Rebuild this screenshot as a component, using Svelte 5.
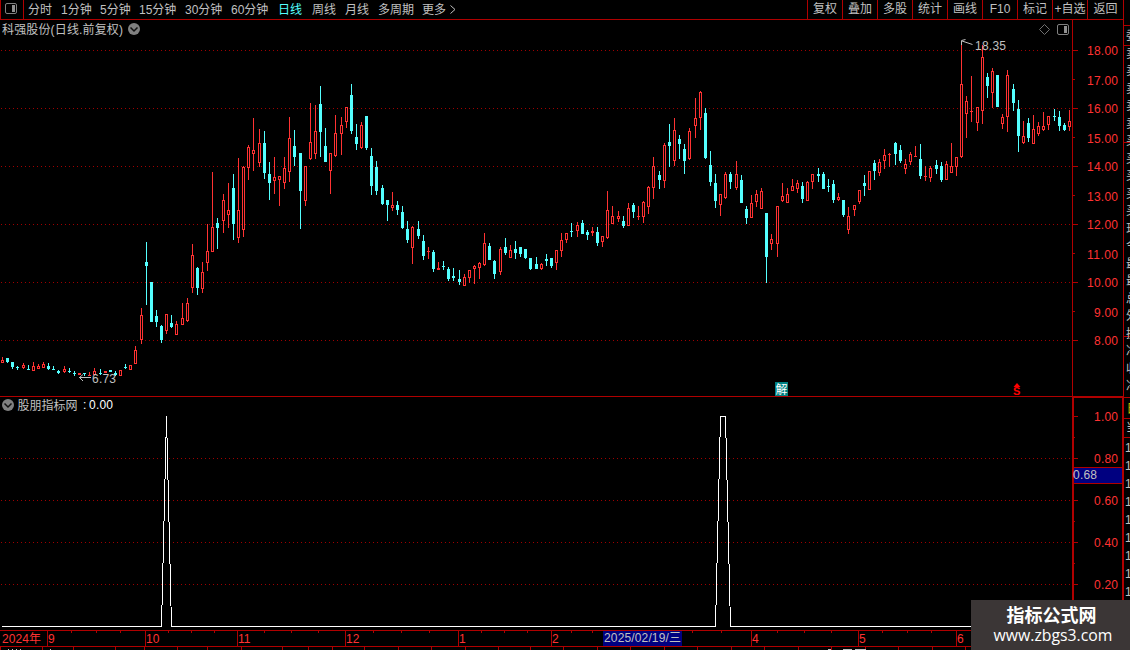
<script lang="ts">
  // x, high, body top, body bottom, low, direction (1 = rise, 0 = fall)
  const candles = [
    [2, 357, 360, 363, 363, 1], [7, 358, 358, 362, 363, 0], [12, 362, 362, 367, 369, 0],
    [17, 366, 367, 368, 370, 0], [23, 363, 365, 368, 369, 1], [28, 365, 369, 370, 370, 0],
    [33, 362, 366, 371, 371, 1], [38, 364, 366, 369, 369, 1], [43, 362, 364, 368, 368, 1],
    [48, 363, 366, 369, 370, 0], [53, 366, 369, 370, 370, 0], [58, 370, 371, 373, 374, 0],
    [64, 366, 369, 372, 373, 1], [69, 368, 371, 372, 373, 0], [74, 371, 373, 374, 376, 0],
    [79, 373, 373, 375, 375, 1], [84, 373, 373, 374, 376, 0], [89, 372, 375, 376, 376, 1],
    [94, 368, 371, 375, 375, 1], [100, 369, 373, 374, 375, 0], [105, 371, 371, 373, 373, 1],
    [110, 370, 370, 372, 372, 0], [115, 371, 373, 375, 376, 0], [120, 370, 370, 376, 376, 1],
    [125, 364, 367, 368, 369, 0], [130, 365, 365, 370, 370, 1], [135, 346, 350, 364, 364, 1],
    [141, 308, 315, 340, 344, 1], [146, 242, 262, 266, 305, 0], [151, 282, 282, 322, 322, 0],
    [156, 310, 316, 322, 327, 0], [161, 325, 326, 340, 343, 0], [166, 314, 314, 331, 334, 1],
    [171, 315, 323, 327, 328, 0], [176, 321, 324, 335, 335, 1], [182, 303, 318, 325, 325, 1],
    [187, 298, 303, 321, 322, 1], [192, 244, 255, 288, 293, 1], [197, 267, 268, 288, 295, 0],
    [202, 262, 272, 289, 293, 1], [207, 224, 251, 263, 271, 1], [212, 172, 227, 252, 252, 1],
    [217, 218, 223, 228, 249, 0], [223, 194, 200, 221, 233, 1], [228, 183, 210, 215, 228, 1],
    [233, 174, 188, 224, 240, 0], [238, 158, 210, 238, 243, 1], [243, 166, 167, 230, 237, 1],
    [248, 145, 147, 168, 180, 1], [253, 118, 150, 154, 171, 1], [259, 129, 143, 163, 167, 1],
    [264, 131, 143, 173, 179, 0], [269, 162, 174, 183, 200, 0], [274, 157, 177, 181, 194, 1],
    [279, 176, 176, 180, 206, 1], [284, 157, 168, 183, 189, 1], [289, 117, 138, 172, 182, 1],
    [294, 130, 146, 157, 166, 0], [300, 153, 153, 191, 229, 0], [305, 166, 166, 201, 206, 1],
    [310, 103, 142, 159, 160, 1], [315, 105, 131, 154, 159, 1], [320, 86, 104, 132, 157, 0],
    [325, 128, 146, 162, 162, 0], [330, 153, 153, 171, 194, 1], [335, 115, 133, 156, 157, 1],
    [341, 117, 125, 134, 155, 1], [346, 107, 107, 122, 128, 1], [351, 84, 95, 131, 134, 0],
    [356, 124, 137, 144, 150, 0], [361, 122, 125, 148, 149, 1], [366, 116, 116, 148, 150, 0],
    [371, 148, 156, 186, 195, 0], [376, 161, 167, 191, 195, 0], [382, 185, 188, 204, 205, 0],
    [387, 200, 200, 205, 221, 0], [392, 192, 205, 208, 211, 1], [397, 201, 205, 210, 215, 0],
    [402, 206, 212, 228, 229, 0], [407, 221, 229, 240, 243, 0], [412, 226, 227, 248, 264, 1],
    [418, 221, 229, 236, 239, 0], [423, 235, 241, 256, 260, 0], [428, 247, 251, 252, 259, 1],
    [433, 250, 252, 269, 272, 0], [438, 262, 268, 270, 270, 1], [443, 261, 266, 267, 270, 0],
    [448, 267, 269, 279, 281, 0], [453, 268, 276, 278, 281, 0], [459, 270, 279, 282, 285, 0],
    [464, 274, 277, 286, 286, 1], [469, 270, 270, 278, 283, 1], [474, 265, 266, 269, 284, 1],
    [479, 262, 263, 268, 279, 1], [484, 233, 243, 265, 266, 1], [489, 243, 246, 260, 260, 0],
    [494, 260, 261, 274, 279, 0], [500, 247, 249, 272, 275, 1], [505, 238, 247, 253, 255, 0],
    [510, 245, 250, 258, 258, 1], [515, 241, 249, 253, 259, 0], [520, 247, 247, 254, 257, 0],
    [525, 249, 249, 258, 259, 0], [530, 258, 258, 269, 270, 0], [536, 257, 264, 269, 269, 0],
    [541, 263, 264, 269, 270, 1], [546, 254, 259, 261, 266, 0], [551, 258, 258, 266, 268, 0],
    [556, 250, 250, 263, 270, 1], [561, 233, 240, 251, 257, 1], [566, 233, 233, 240, 243, 1],
    [571, 223, 231, 232, 237, 0], [577, 222, 225, 231, 237, 1], [582, 220, 223, 234, 234, 0],
    [587, 230, 232, 235, 240, 0], [592, 227, 231, 233, 236, 1], [597, 227, 232, 243, 246, 0],
    [602, 236, 236, 242, 247, 1], [607, 191, 210, 238, 239, 1], [612, 206, 216, 224, 224, 1],
    [618, 211, 216, 219, 222, 1], [623, 216, 221, 226, 228, 0], [628, 203, 208, 226, 226, 1],
    [633, 203, 205, 212, 218, 0], [638, 206, 216, 217, 220, 1], [643, 201, 202, 217, 223, 1],
    [648, 186, 187, 207, 214, 1], [653, 157, 166, 188, 199, 1], [659, 171, 175, 180, 189, 0],
    [664, 143, 145, 181, 188, 1], [669, 124, 142, 146, 167, 0], [674, 118, 130, 161, 166, 1],
    [679, 135, 139, 144, 159, 0], [684, 144, 149, 161, 174, 0], [689, 128, 131, 159, 160, 1],
    [695, 98, 118, 126, 138, 1], [700, 91, 92, 118, 130, 1], [705, 108, 113, 158, 159, 0],
    [710, 151, 165, 182, 186, 0], [715, 174, 183, 201, 208, 0], [720, 194, 194, 205, 216, 1],
    [725, 172, 174, 198, 199, 1], [730, 172, 174, 182, 189, 0], [736, 161, 174, 188, 190, 1],
    [741, 175, 180, 203, 203, 0], [746, 206, 209, 218, 224, 0], [751, 195, 203, 218, 218, 1],
    [756, 190, 194, 202, 207, 1], [761, 188, 191, 209, 209, 1], [766, 213, 213, 257, 283, 0],
    [771, 234, 239, 244, 250, 1], [777, 206, 206, 244, 257, 1], [782, 183, 196, 201, 202, 1],
    [787, 188, 194, 203, 203, 1], [792, 179, 186, 191, 191, 1], [797, 180, 183, 189, 193, 1],
    [802, 182, 186, 199, 203, 0], [807, 181, 182, 201, 201, 1], [812, 174, 174, 182, 189, 1],
    [818, 168, 174, 176, 182, 0], [823, 172, 174, 189, 189, 0], [828, 179, 186, 187, 192, 0],
    [833, 180, 184, 200, 203, 0], [838, 193, 197, 200, 201, 1], [843, 200, 200, 215, 217, 0],
    [848, 207, 216, 230, 234, 1], [854, 205, 205, 210, 216, 1], [859, 190, 190, 202, 204, 1],
    [864, 175, 183, 186, 196, 0], [869, 171, 171, 190, 190, 1], [874, 160, 163, 171, 180, 0],
    [879, 159, 162, 173, 176, 1], [884, 149, 155, 161, 169, 1], [889, 153, 154, 155, 167, 1],
    [895, 142, 143, 154, 165, 0], [900, 145, 150, 161, 163, 0], [905, 159, 164, 169, 174, 1],
    [910, 152, 154, 162, 165, 1], [915, 146, 156, 157, 157, 1], [920, 144, 159, 176, 179, 0],
    [925, 166, 176, 177, 181, 1], [930, 166, 168, 178, 182, 1], [936, 160, 165, 169, 174, 0],
    [941, 162, 166, 180, 182, 0], [946, 161, 164, 180, 180, 1], [951, 143, 166, 173, 173, 1],
    [956, 157, 157, 167, 176, 1], [961, 42, 84, 157, 158, 1], [966, 96, 101, 114, 138, 1],
    [971, 76, 111, 112, 122, 1], [977, 107, 107, 123, 131, 1], [982, 45, 57, 111, 124, 1],
    [987, 73, 77, 86, 98, 0], [992, 68, 71, 93, 108, 1], [997, 75, 75, 107, 107, 0],
    [1002, 114, 117, 124, 129, 1], [1007, 70, 75, 117, 132, 1], [1013, 84, 89, 103, 111, 0],
    [1018, 100, 109, 136, 152, 0], [1023, 121, 136, 143, 144, 1], [1028, 118, 123, 138, 142, 0],
    [1033, 115, 129, 144, 144, 1], [1038, 122, 126, 134, 136, 1], [1043, 112, 126, 130, 131, 1],
    [1048, 116, 116, 125, 130, 1], [1054, 109, 116, 117, 121, 0], [1059, 111, 117, 126, 131, 0],
    [1064, 123, 125, 130, 131, 0], [1069, 110, 121, 127, 131, 1],
  ];

  const periods = [
    ['分时', 33], ['1分钟', 39], ['5分钟', 39], ['15分钟', 46], ['30分钟', 46], ['60分钟', 47],
    ['日线', 34], ['周线', 33], ['月线', 33], ['多周期', 44], ['更多', 27],
  ] as [string, number][];
  const actions = ['复权', '叠加', '多股', '统计', '画线', 'F10', '标记', '+自选', '返回'];

  const prices = [18, 17, 16, 15, 14, 13, 12, 11, 10, 9, 8];
  const levels = ['1.00', '0.80', '0.60', '0.40', '0.20'];
  const months = [
    ['9', 47], ['10', 145], ['11', 237], ['12', 345], ['1', 458], ['2', 551], ['', 633],
    ['4', 751], ['5', 858], ['6', 956],
  ] as [string, number][];

  const priceY = (i: number) => 50 + i * 29;
  const levelY = (i: number) => 416 + i * 42;

  const minorTicks = months.slice(0, -1).flatMap(([, x], i) => {
    const step = (months[i + 1][1] - x) / 4;
    return [1, 2, 3].map((n) => Math.floor(x + step * n));
  });
  const footTicks = [
    0, 42, 73, 115, 144, 177, 207, 241, 282, 308, 332, 364, 398, 431, 465, 498, 530, 563, 597,
    630, 664, 697, 731, 764, 798, 831, 865, 898, 932, 965,
  ];
  const sidePanel = '委卖卖卖卖卖买买买买买现今最最总外换净收净'.split('');
</script>

<div class="terminal">
  <header class="toolbar">
    <div class="panel-toggle">
      <svg width="13" height="11" viewBox="0 0 13 11">
        <rect x="0.5" y="0.5" width="11" height="10" rx="1.5" fill="none" stroke="#808080" />
        <rect x="7" y="2" width="3" height="7" fill="#909090" />
      </svg>
    </div>
    <nav class="periods">
      {#each periods as [label, width]}
        <span class:active={label === '日线'} style:width="{width}px">{label}</span>
      {/each}
      <svg width="8" height="10" viewBox="0 0 8 10">
        <path d="M1.5 0.5L6 4.5L1.5 8.5" fill="none" stroke="#c0c0c0" />
      </svg>
    </nav>
    <div class="actions">
      {#each actions as label}
        <span>{label}</span>
      {/each}
    </div>
  </header>

  <svg class="chart" width="1130" height="630" viewBox="0 20 1130 630">
    <g class="grid" shape-rendering="crispEdges">
      {#each prices as _, i}
        {#if i % 2 === 0}
          <line x1="1" x2="1072" y1={priceY(i) + 0.5} y2={priceY(i) + 0.5} />
        {/if}
      {/each}
      {#each [1, 2, 3, 4] as i}
        <line x1="1" x2="1072" y1={levelY(i) + 0.5} y2={levelY(i) + 0.5} />
      {/each}
    </g>

    <g shape-rendering="crispEdges">
      {#each candles as [x, high, top, bottom, low, up]}
        <rect class={up ? 'rise' : 'fall'} {x} y={high} width="1" height={low - high} />
        <rect class={up ? 'rise' : 'fall'} x={x - 1} y={top} width="3" height={bottom - top} />
        {#if up && bottom - top > 2}
          <rect class="hollow" {x} y={top + 1} width="1" height={bottom - top - 2} />
        {/if}
      {/each}
    </g>

    <g class="frame" shape-rendering="crispEdges">
      <rect x="0" y="396" width="1072" height="1" />
      <rect x="1072" y="20" width="1" height="377" />
      <rect x="1072" y="396" width="52" height="2" />
      <rect x="1072" y="397" width="2" height="233" />
      <rect x="1123" y="0" width="1" height="397" />
      <rect x="1122" y="397" width="2" height="233" />
      <rect x="0" y="630" width="1124" height="1" />
      <rect x="0" y="646" width="1124" height="1" />
      {#each prices as _, i}
        <rect x="1073" y={priceY(i)} width={i % 2 ? 2 : 5} height="1" />
      {/each}
      {#each levels as _, i}
        <rect x="1074" y={levelY(i)} width="4" height="1" />
        <rect x="1074" y={levelY(i) + 21} width="1" height="1" />
      {/each}
      {#each months as [label, x]}
        <rect {x} y="631" width="1" height="15" />
      {/each}
      {#each minorTicks as x}
        <rect {x} y="631" width="1" height="2" />
      {/each}
      {#each footTicks as x}
        <rect {x} y="647" width="1" height="3" />
      {/each}
    </g>

    <!-- title row -->
    <text class="label" x="2" y="34" textLength="121">科强股份(日线.前复权)</text>
    <circle cx="134" cy="29" r="6" fill="#808080" />
    <path d="M130.5 27.5L134 31L137.5 27.5" class="chevron" />
    <path d="M1039.5 29.5L1044.5 24.5L1049.5 29.5L1044.5 34.5Z" fill="none" stroke="#707070" />
    <rect x="1057.5" y="24.5" width="11" height="10" rx="1.5" fill="none" stroke="#808080" />
    <rect x="1064" y="26" width="3" height="7" fill="#909090" />

    <!-- extremes -->
    <path d="M972.5 44.5L962 41M961.5 45V40.5L965.5 39.5" class="arrow" />
    <text class="label" x="975" y="50" textLength="31">18.35</text>
    <path d="M91 377.5H79M83 374.5L79.5 377.5L83 381" class="arrow" />
    <text class="label" x="92" y="383" textLength="24">6.73</text>

    <!-- event marks -->
    <rect x="775" y="382" width="13" height="14" fill="#008080" />
    <text x="775.5" y="393.5" class="event">解</text>
    <path d="M1017 383L1013.5 387H1020.5Z" fill="#ff0000" />
    <text x="1013" y="395" class="dollar">S</text>

    {#each prices as price, i}
      <text
        class="scale"
        x={price < 10 ? 1094 : 1087}
        y={priceY(i) + 5 + (i % 2)}
        textLength={price < 10 ? 24 : 31}>{price.toFixed(2)}</text
      >
    {/each}

    <!-- indicator -->
    <circle cx="8" cy="405" r="6" fill="#808080" />
    <path d="M4.5 403.5L8 407L11.5 403.5" class="chevron" />
    <text class="label" x="17.5" y="410" textLength="60">股朋指标网</text>
    <text class="value" x="83" y="409">:</text>
    <text class="value" x="89" y="409" textLength="24">0.00</text>
    <path
      class="signal"
      shape-rendering="crispEdges"
      d="M2 626.5H161.5L166.5 416L171.5 626.5H715.5L720.5 416.5H725.5L730.5 626.5H1072"
    />
    {#each levels as level, i}
      <text class="scale" x="1094" y={levelY(i) + 5} textLength="24">{level}</text>
    {/each}
    <rect x="1074" y="467" width="48" height="17" fill="#b00000" />
    <rect x="1074" y="468" width="48" height="15" fill="#000080" />
    <text class="label" x="1073" y="479" textLength="24">0.68</text>

    <!-- time axis -->
    <text class="scale" x="2" y="643" textLength="39">2024年</text>
    {#each months as [label, x]}
      <text class="scale" x={x + 1} y="643">{label}</text>
    {/each}
    <rect x="603" y="631" width="79" height="15" fill="#000080" />
    <text class="label" x="604" y="642" textLength="77">2025/02/19/三</text>

    <!-- neighbouring quote panel, cut by the window edge -->
    <g class="frame" shape-rendering="crispEdges">
      {#each [25, 45, 142, 336, 397, 418, 437] as y}
        <rect x="1124" {y} width="6" height="1" />
      {/each}
    </g>
    {#each sidePanel as label, i}
      <text class="label" x="1126" y={40 + i * 17.5}>{label}</text>
    {/each}
    <text class="yellow" x="1126.5" y="413">日</text>
    <text class="label" x="1126" y="432">当</text>
    {#each [0, 1, 2, 3, 4, 5, 6, 7, 8] as i}
      <text class="label" x="1125" y={452 + i * 18}>1</text>
    {/each}

    <!-- tops of the status line below -->
    <path
      class="status"
      shape-rendering="crispEdges"
      d="M8 649.5h1m3 0h1m3 0h1m3 0h1m29 0h1M828 649.5h3m12 0h9m3 0h11"
    />
  </svg>

  <div class="watermark">
    <strong>指标公式网</strong>
    <span>www.zbgs3.com</span>
  </div>
</div>

<style>
  :global(body) {
    background: #000;
    overflow: hidden;
  }

  .terminal {
    position: relative;
    width: 1130px;
    height: 650px;
    overflow: hidden;
    background: #000;
    color: #c0c0c0;
    font: 12px "Liberation Sans", "Noto Sans CJK SC", sans-serif;
  }

  .toolbar {
    display: flex;
    box-sizing: border-box;
    width: 1124px;
    height: 20px;
    border-right: 1px solid #b00000;
    border-bottom: 1px solid #b00000;
    line-height: 18px;
    white-space: nowrap;
  }

  .panel-toggle {
    box-sizing: border-box;
    width: 24px;
    padding: 3px 0 0 4px;
    border: solid #b00000;
    border-width: 0 1px;
    line-height: 0;
  }

  .periods {
    display: flex;
    align-items: center;
    padding-left: 4px;
  }

  .active {
    color: #54ffff;
  }

  .actions {
    display: flex;
    margin-left: auto;
    line-height: 19px;
  }

  .actions span {
    box-sizing: border-box;
    width: 35px;
    border-left: 1px solid #b00000;
    text-align: center;
  }

  .actions span:last-child {
    width: 36px;
  }

  .chart {
    display: block;
  }

  .grid line {
    stroke: #a00000;
    stroke-dasharray: 1 3;
  }

  .frame rect {
    fill: #b00000;
  }

  .rise {
    fill: #ff3232;
  }

  .fall {
    fill: #54ffff;
  }

  .hollow {
    fill: #000;
  }

  .label {
    fill: #c0c0c0;
  }

  .scale {
    fill: #ff3232;
  }

  .value {
    fill: #fff;
  }

  .yellow {
    fill: #c0c000;
  }

  .event {
    fill: #fff;
  }

  .dollar {
    fill: #ff0000;
    font-size: 11px;
    font-weight: bold;
  }

  .arrow,
  .status {
    fill: none;
    stroke: #c0c0c0;
  }

  .chevron {
    fill: none;
    stroke: #101010;
    stroke-width: 1.5;
  }

  .signal {
    fill: none;
    stroke: #fff;
  }

  .watermark {
    position: absolute;
    right: 0;
    bottom: 0;
    display: flex;
    flex-direction: column;
    align-items: center;
    box-sizing: border-box;
    width: 159px;
    height: 50px;
    padding-left: 2px;
    background: #3b3636;
    color: #fff;
  }

  .watermark strong {
    height: 25px;
    font: bold 18px/29px "Noto Sans CJK SC", sans-serif;
  }

  .watermark span {
    padding-left: 3px;
    font: 15.8px/20px "Open Sans", sans-serif;
  }
</style>
